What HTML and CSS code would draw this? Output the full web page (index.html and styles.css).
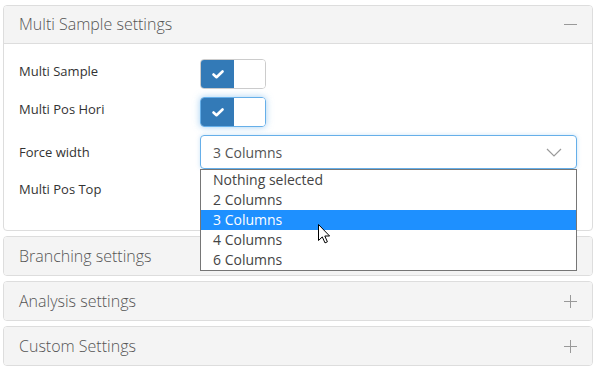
FILE: index.html
```html
<!DOCTYPE html>
<html lang="en">
<head>
  <meta charset="UTF-8" />
  <title>Settings</title>
  <link rel="stylesheet" href="styles.css">
</head>
<body>

  <div class="settings">

    <section class="panel open">
      <div class="panel-heading">
        <span class="panel-title">Multi Sample settings</span>
        <span class="icon-minus"></span>
      </div>
      <div class="panel-body">
        <div class="row">
          <label class="row-label">Multi Sample</label>
          <div class="toggle">
            <span class="toggle-on">
              <svg width="12" height="9" viewBox="0 0 12 9"><polyline points="1.5,4.5 4.5,7.2 10.5,1.5" fill="none" stroke="#fff" stroke-width="2.6" stroke-linecap="round" stroke-linejoin="round"/></svg>
            </span>
            <span class="toggle-off"></span>
          </div>
        </div>
        <div class="row">
          <label class="row-label">Multi Pos Hori</label>
          <div class="toggle focused">
            <span class="toggle-on">
              <svg width="12" height="9" viewBox="0 0 12 9"><polyline points="1.5,4.5 4.5,7.2 10.5,1.5" fill="none" stroke="#fff" stroke-width="2.6" stroke-linecap="round" stroke-linejoin="round"/></svg>
            </span>
            <span class="toggle-off"></span>
          </div>
        </div>
        <div class="row">
          <label class="row-label select-label">Force width</label>
          <div class="select-wrap">
            <div class="select">
              <span>3 Columns</span>
              <svg class="chevron" width="16" height="9" viewBox="0 0 16 9"><polyline points="1,1 8,8 15,1" fill="none" stroke="#9a9a9a" stroke-width="1.2"/></svg>
            </div>
            <ul class="options">
              <li>Nothing selected</li>
              <li>2 Columns</li>
              <li class="active">3 Columns</li>
              <li>4 Columns</li>
              <li>6 Columns</li>
            </ul>
            <svg class="cursor" width="13" height="20" viewBox="0 0 13 20"><path d="M0.5 0.5 L0.5 16.5 L4.3 12.9 L7 18.9 L9.4 17.8 L6.8 12 L11.6 12 Z" fill="#fff" stroke="#000" stroke-width="1" stroke-linejoin="round"/></svg>
          </div>
        </div>
        <div class="row">
          <label class="row-label">Multi Pos Top</label>
          <div class="toggle">
            <span class="toggle-on"></span>
            <span class="toggle-off"></span>
          </div>
        </div>
      </div>
    </section>

    <section class="panel">
      <div class="panel-heading">
        <span class="panel-title">Branching settings</span>
        <span class="icon-plus"></span>
      </div>
    </section>

    <section class="panel">
      <div class="panel-heading">
        <span class="panel-title">Analysis settings</span>
        <span class="icon-plus"></span>
      </div>
    </section>

    <section class="panel">
      <div class="panel-heading">
        <span class="panel-title">Custom Settings</span>
        <span class="icon-plus"></span>
      </div>
    </section>

  </div>

</body>
</html>
```

FILE: styles.css
```css
body {
  margin: 0;
  font-family: 'Open Sans', sans-serif;
  background: #fff;
  color: #333;
}
.settings {
  padding: 5px 13px 0 3px;
}
.panel {
  border: 1px solid #dddddd;
  border-radius: 4px;
  margin-bottom: 5px;
  background: #fff;
}
.panel-heading {
  height: 38px;
  box-sizing: border-box;
  display: flex;
  align-items: center;
  justify-content: space-between;
  padding: 0 15px 0 15px;
  background: #f4f4f4;
  border-radius: 3px;
}
.panel.open .panel-heading {
  border-bottom: 1px solid #dddddd;
  border-radius: 3px 3px 0 0;
}
.panel-title {
  font-size: 16px;
  font-weight: 300;
  color: #555;
  padding-bottom: 1px;
}
.icon-minus,
.icon-plus {
  position: relative;
  width: 13px;
  height: 13px;
}
.icon-minus::before,
.icon-plus::before {
  content: "";
  position: absolute;
  left: 0;
  top: 6px;
  width: 13px;
  height: 1px;
  background: #999;
}
.icon-plus::after {
  content: "";
  position: absolute;
  left: 6px;
  top: 0;
  width: 1px;
  height: 13px;
  background: #999;
}
.panel-body {
  padding: 15px 15px 23px 15px;
  display: flex;
  flex-direction: column;
  gap: 8px;
}
.row {
  display: flex;
  align-items: flex-start;
}
.row-label {
  width: 181px;
  flex: none;
  font-size: 13px;
  line-height: 18px;
  padding-top: 3px;
  color: #333;
}
.row-label.select-label {
  padding-top: 8px;
}
.toggle {
  display: flex;
  width: 66px;
  height: 30px;
  box-sizing: border-box;
  border: 1px solid #cccccc;
  border-radius: 4px;
  overflow: hidden;
}
.toggle.focused {
  border-color: #66afe9;
  box-shadow: 0 0 7px rgba(102, 175, 233, 0.6);
}
.toggle-on {
  width: 33px;
  background: #337ab7;
  display: flex;
  align-items: center;
  justify-content: center;
}
.toggle-on svg {
  margin-left: 1px;
}
.toggle-off {
  flex: 1;
  background: #fff;
}
.select-wrap {
  position: relative;
  flex: 1;
}
.select {
  height: 34px;
  box-sizing: border-box;
  border: 1px solid #66afe9;
  border-radius: 4px;
  box-shadow: 0 0 4px rgba(102, 175, 233, 0.35);
  display: flex;
  align-items: center;
  justify-content: space-between;
  padding: 0 14px 0 12px;
  font-size: 14px;
  color: #555;
}
.options {
  position: absolute;
  top: 34px;
  left: 0;
  right: 0;
  margin: 0;
  padding: 0;
  list-style: none;
  background: #fff;
  border: 1px solid #767676;
  z-index: 2;
}
.options li {
  height: 20px;
  line-height: 20px;
  padding-left: 12px;
  font-size: 14px;
  color: #444;
}
.options li.active {
  background: #1e90ff;
  color: #fff;
}
.cursor {
  position: absolute;
  left: 118px;
  top: 89px;
  z-index: 3;
}
```
